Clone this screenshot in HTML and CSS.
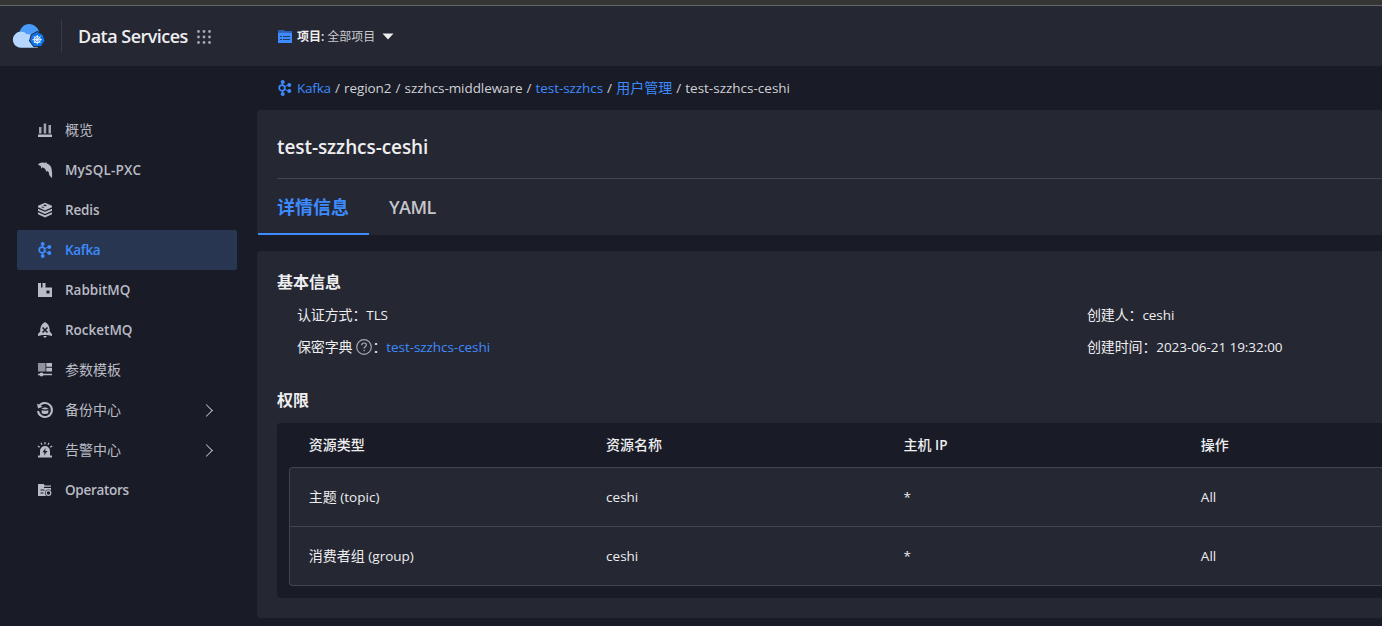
FILE: index.html
```html
<!DOCTYPE html>
<html lang="zh-CN">
<head>
<meta charset="utf-8">
<title>Data Services</title>
<link rel="stylesheet" href="styles.css">
</head>
<body>
<svg class="defs" width="0" height="0" aria-hidden="true">
  <symbol id="kafka" viewBox="0 0 16 16">
    <g stroke="currentColor" fill="none"><path stroke-width="1" d="M5.500 2v3M5.500 11v3M7.500 6.800l4-2M7.500 9.200l4 2"/><circle cx="5" cy="8" r="2.800" stroke-width="1.700"/></g>
    <g fill="currentColor"><circle cx="5.700" cy="2" r="2"/><circle cx="5.700" cy="14" r="2"/><circle cx="12.300" cy="4.900" r="2"/><circle cx="12.300" cy="11.100" r="2"/></g>
  </symbol>
</svg>
<div class="strip"></div>
<header class="topbar">
  <div class="brand">
    <svg class="logo" viewBox="0 0 34 26" width="34" height="26">
      <path d="M7 11C8 5 12 1 17 1s10 4 10 9l-5 10H9z" fill="#4a9bf8"/>
      <path d="M9 24.700a8 8 0 1 1 5.700-13.500Q18 10 20 13.500L22 18l4 6.700z" fill="#b5d7ff"/>
      <path d="M25 8.500l6 3 2 6-3.800 6.200h-7.500L17.500 18l1.700-6z" fill="#0d74ec" stroke="#252732" stroke-width="1"/>
      <g stroke="#fff" fill="none" stroke-width=".9"><circle cx="25.200" cy="16.700" r="3.200"/><path d="M25.200 12v9.400M20.500 16.700h9.400M21.900 13.400l6.600 6.600M28.500 13.400l-6.600 6.600"/></g>
    </svg>
    <span class="rule"></span>
    <span class="brand-name">Data Services</span>
    <svg class="grid-icon" width="16" height="16" viewBox="0 0 16 16" fill="#a5a7b3"><circle cx="2.500" cy="2.500" r="1.400"/><circle cx="8" cy="2.500" r="1.400"/><circle cx="13.500" cy="2.500" r="1.400"/><circle cx="2.500" cy="8" r="1.400"/><circle cx="8" cy="8" r="1.400"/><circle cx="13.500" cy="8" r="1.400"/><circle cx="2.500" cy="13.500" r="1.400"/><circle cx="8" cy="13.500" r="1.400"/><circle cx="13.500" cy="13.500" r="1.400"/></svg>
  </div>
  <div class="project">
    <svg width="14" height="14" viewBox="0 0 14 14"><path d="M0 0h6l1 1h7v1.500H0z" fill="#2c62b6"/><path d="M0 2.500h14V13H0z" fill="#3d8bff"/><path d="M2 6.500h2M5 6.500h7M2 9.500h2M5 9.500h7" stroke="#25395f" stroke-width="1.100"/></svg>
    <b>项目:</b><span>全部项目</span>
    <svg class="caret" width="12" height="7" viewBox="0 0 12 7"><path d="M.5.500h11L6 6.500z" fill="#eee"/></svg>
  </div>
</header>
<div class="layout">
  <nav class="side">
    <a class="item"><svg viewBox="0 0 16 16"><path d="M1 12.500h14V15H1z"/><path d="M2 5h2.500v6.500H2zM6.700 1.500h2.500v10H6.700zM11.500 3H14v8.500h-2.500z" opacity=".85"/></svg><span class="cn">概览</span></a>
    <a class="item"><svg viewBox="0 0 16 16"><path d="M1 2.700C2.500.8 5 0 7.500 1L9.500.2 9.800 1.500C13 2.500 14.700 5 14.700 8c.5 2.500.5 5 .3 8-1-1-2.300-1.900-3-3.500.2-1.500-.2-2.500-1.500-3.500L9.500 9.800 8 6.800 5.500 5.300l-1 1.400L3.700 4z"/></svg><span class="n-mysql">MySQL-PXC</span></a>
    <a class="item"><svg viewBox="0 0 16 16"><path d="M8 .7l7 3v1.600L8 8.500 1 5.300V3.700z"/><path d="M1 6.800l7 3 7-3v2l-7 3.200-7-3.200zM1 10.300l7 3 7-3v1.900L8 15.500l-7-3.300z"/><path class="hole" d="M6 3.300l2-.7 2 .9-2 .8zM4 4.700h2l1.500 1h-2z"/></svg><span class="tight">Redis</span></a>
    <a class="item active"><svg viewBox="0 0 16 16"><use href="#kafka"/></svg><span class="n-kafka">Kafka</span></a>
    <a class="item"><svg viewBox="0 0 16 16"><path d="M1 1h3v4.500h1.500V1h3v4.500H15V15H1z"/><path class="hole" d="M9.500 8.500h3v3h-3z"/></svg><span>RabbitMQ</span></a>
    <a class="item"><svg viewBox="0 0 16 16"><path d="M8 0c3 1.500 5 4.500 4.700 9.500L15 12v2l-4.500-1H5.500L1 14v-2l2.300-2.500C3 4.500 5 1.500 8 0zM6 14h4l-2 2z"/><path class="cut" d="M5.500 5.500l5 5M10.500 5.500l-5 5"/></svg><span>RocketMQ</span></a>
    <a class="item"><svg viewBox="0 0 16 16"><path d="M1 1h7.500v8.500H1z" opacity=".75"/><path d="M9.300 1H15v3.800H9.300zM9.300 5.700H15v3.800H9.300zM1 11.800h14v1.500H1z"/><circle cx="4.500" cy="12.600" r="2"/></svg><span class="cn">参数模板</span></a>
    <a class="item"><svg viewBox="0 0 16 16"><path class="line" d="M2 4.300A7 7 0 1 1 1 9"/><path d="M0 1.500l1 5 4.500-1.800zM4.700 6.500C6 5 10 5 11.300 6.500v4.500c-1.500 1.400-5.100 1.400-6.600 0z"/><path class="cut thin" d="M4.500 7.300C6 8.500 10 8.500 11.500 7.300"/></svg><span class="cn">备份中心</span><i class="chev"></i></a>
    <a class="item"><svg viewBox="0 0 16 16"><path d="M3 13.500V9a5 5 0 0 1 10 0v4.500h2V15.500H1v-2z"/><path class="line thin" d="M8 0v2.500M4 .8l1 2M12 .8l-1 2M.8 4l2 1.300M15.200 4l-2 1.300"/><path class="hole" d="M8.600 6L5.500 10.300h2L7 13.500l3.500-4.500H8.200z"/></svg><span class="cn">告警中心</span><i class="chev"></i></a>
    <a class="item"><svg viewBox="0 0 16 16"><path d="M1 2h5.500L8 3.500h6V14H1z"/><path class="cut thin" d="M7 5.300h7M3.500 8h4M3.500 11h3"/><circle class="hole" cx="11.500" cy="11" r="3.500"/><circle class="line thin" cx="11.500" cy="11" r="2.300"/></svg><span class="n-op">Operators</span></a>
  </nav>
  <main class="main">
    <div class="crumbs">
      <svg width="16" height="16" viewBox="0 0 16 16"><use href="#kafka"/></svg>
      <a>Kafka</a><em>/</em><span>region2</span><em>/</em><span>szzhcs-middleware</span><em>/</em><a>test-szzhcs</a><em>/</em><a class="cn">用户管理</a><em>/</em><span class="last">test-szzhcs-ceshi</span>
    </div>
    <section class="panel head">
      <h1>test-szzhcs-ceshi</h1>
      <div class="tabs"><a class="tab on">详情信息</a><a class="tab yaml">YAML</a></div>
    </section>
    <section class="panel body">
      <h2>基本信息</h2>
      <div class="facts">
        <div class="fact"><span class="cn">认证方式：</span><span>TLS</span></div>
        <div class="fact"><span class="cn">创建人：</span><span>ceshi</span></div>
        <div class="fact"><span class="cn">保密字典</span><svg class="help" width="16" height="16" viewBox="0 0 16 16"><circle cx="8" cy="8" r="7.300"/><path d="M5.700 6.200C5.700 3.300 10.400 3.300 10.400 6c0 1.700-2.300 1.700-2.300 3.500M8.100 10.800v1.400"/></svg><span class="cn">：</span><a>test-szzhcs-ceshi</a></div>
        <div class="fact"><span class="cn">创建时间：</span><span>2023-06-21 19:32:00</span></div>
      </div>
      <h2>权限</h2>
      <div class="table">
        <div class="row th"><span>资源类型</span><span>资源名称</span><span>主机 <b>IP</b></span><span>操作</span></div>
        <div class="rows">
          <div class="row"><span>主题 <i>(topic)</i></span><span><i>ceshi</i></span><span><i>*</i></span><span><i>All</i></span></div>
          <div class="row"><span>消费者组 <i>(group)</i></span><span><i>ceshi</i></span><span><i>*</i></span><span><i>All</i></span></div>
        </div>
      </div>
    </section>
  </main>
</div>
</body>
</html>
```
FILE: styles.css
```css
* { box-sizing: border-box; }
body { margin: 0; height: 626px; overflow: hidden; background: #191b26; color: #eeeef0; font: 13.5px/20px "Open Sans", "Noto Sans CJK SC", sans-serif; }
i, em { font-style: normal; }
.defs { position: absolute; }
.strip { height: 6px; background: #353535; border-bottom: 1px solid #656765; }
.topbar { display: flex; height: 60px; align-items: center; background: #252732; }
.brand { display: flex; align-items: center; width: 278px; padding-left: 12px; }
.rule { width: 1px; height: 32px; margin: 0 16px 0 15px; background: #393b46; }
.brand-name { width: 118px; font-size: 18px; font-weight: 600; letter-spacing: -.52px; white-space: nowrap; }
.grid-icon { margin-top: 2px; }
.project { display: flex; align-items: center; padding-top: 1px; font-size: 12px; color: #c9cad0; }
.project svg { margin-right: 5px; }
.project b { margin-right: 3px; font-weight: 600; color: #eeeef0; }
.project .caret { margin: -1px 0 0 7px; }
.layout { display: flex; height: 560px; }
.side { width: 257px; flex: none; padding: 44px 20px 0 17px; }
.item { display: flex; height: 40px; align-items: center; padding: 0 26px 0 20px; border-radius: 2px; color: #b9bbc5; font-weight: 600; }
.item .cn { font-weight: 400; }
.item svg { width: 16px; height: 16px; margin-right: 12px; fill: currentColor; overflow: visible; }
.n-mysql { letter-spacing: .18px; }
.tight { letter-spacing: -.15px; }
.n-kafka { letter-spacing: -.3px; }
.n-op { letter-spacing: -.3px; }
.cn { font-size: 14px; }
.hole { fill: #191b26; }
.cut { fill: none; stroke: #191b26; stroke-width: 1.6; }
.line { fill: none; stroke: currentColor; stroke-width: 2; }
.thin { stroke-width: 1.2; }
.item.active { background: #283651; color: #3d8bff; }
.chev { width: 9px; height: 9px; margin-left: auto; border: solid #b9bbc5; border-width: 1.5px 1.5px 0 0; transform: rotate(45deg); }
.main { flex: 1; min-width: 0; }
.crumbs { display: flex; height: 44px; align-items: center; padding-left: 20px; color: #d0d1d5; white-space: nowrap; }
.crumbs svg { margin-right: 4px; color: #3d8bff; }
.crumbs > a:not(.cn), .crumbs span { letter-spacing: -.07px; }
.crumbs > a:nth-of-type(1) { letter-spacing: -.2px; }
.crumbs em { width: 13.1px; text-align: center; }
.crumbs .last { letter-spacing: 0; }
a { color: #3d8bff; }
.panel { background: #252732; border-radius: 4px 0 0 4px; }
.head { height: 125px; margin-bottom: 16px; }
h1 { height: 69px; margin: 0 0 0 20px; border-bottom: 1px solid #42444f; font-size: 19px; line-height: 75px; font-weight: 600; letter-spacing: -.08px; }
.tabs { display: flex; padding-left: 1px; }
.tab { height: 56px; padding: 0 20px; font-size: 18px; line-height: 57px; font-weight: 600; color: #c5c6cb; }
.tab.on { padding-left: 19px; font-weight: 700; color: #3d8bff; border-bottom: 2px solid #3d8bff; }
.yaml { letter-spacing: -.55px; }
.body { height: 367px; padding: 20px 0 20px 20px; }
h2 { margin: 0; font-size: 16px; line-height: 22px; font-weight: 600; }
.facts { display: grid; grid-template-columns: 790px 1fr; padding: 6px 0 0 20px; height: 96px; grid-template-rows: 32px 32px; }
.fact { display: flex; align-items: center; white-space: nowrap; }
.fact .cn { letter-spacing: -.15px; }
.fact > :last-child { letter-spacing: -.06px; }
.help { margin: 0 0 0 4px; fill: none; stroke: #a8aab4; stroke-width: 1.2; }
.table { height: 175px; margin-top: 12px; padding-left: 12px; overflow: hidden; background: #191b26; border-radius: 4px 0 0 4px; }
.row { display: grid; grid-template-columns: repeat(4, 297.4px); height: 60px; align-items: center; padding: 0 0 1px 18.7px; font-size: 14px; width: 1209px; }
.row i { font-size: 13.5px; }
.row.th { height: 44px; padding: 0 0 0 19.7px; font-weight: 500; }
.th b { font-weight: 600; font-size: 13.5px; }
.rows { border: 1px solid #42444f; border-right: 0; border-radius: 4px 0 0 4px; background: #252732; height: 119px; }
.rows .row:first-child { height: 58px; padding-bottom: 1px; }
.rows .row + .row { border-top: 1px solid #42444f; }
```
